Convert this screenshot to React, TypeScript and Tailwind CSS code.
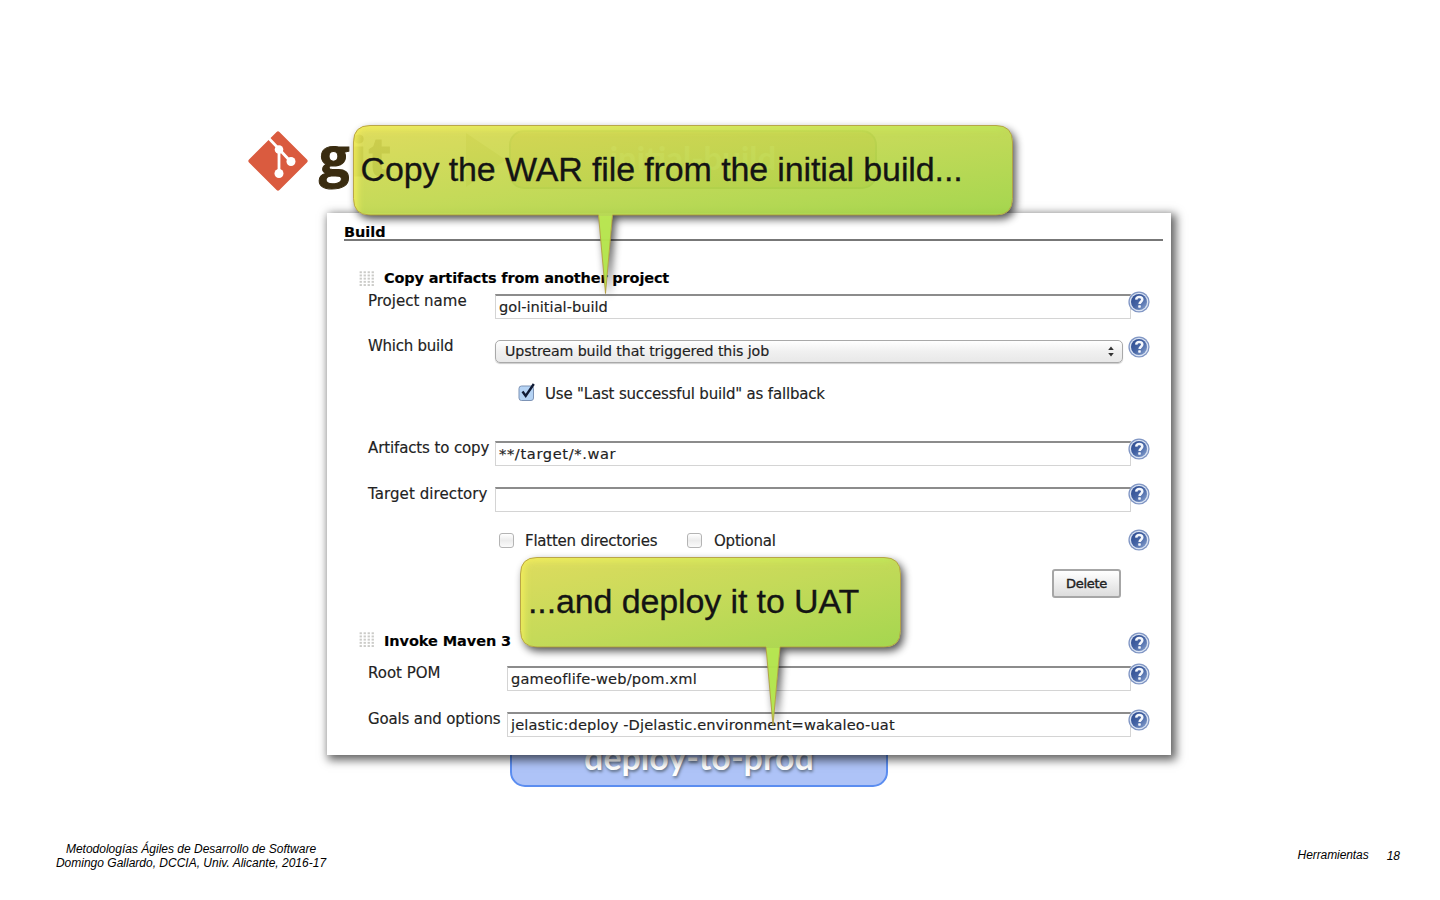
import type { ReactNode } from "react";

const UI = "font-['DejaVu_Sans',sans-serif] [-webkit-text-stroke:0.15px_#222]";

function Help({ className = "" }: { className?: string }) {
  return (
    <svg className={`relative h-[22px] w-[22px] shrink-0 ${className}`} viewBox="0 0 22 22">
      <defs>
        <linearGradient id="help" x1="0" y1="0" x2="1" y2="1">
          <stop offset="0" stopColor="#2c4a90" />
          <stop offset="0.5" stopColor="#4564a4" />
          <stop offset="1" stopColor="#8da6d2" />
        </linearGradient>
      </defs>
      <circle cx="11" cy="11" r="10.6" fill="#8096c4" />
      <circle cx="11" cy="11" r="9.3" fill="#dbe4f3" />
      <circle cx="11" cy="11" r="8" fill="url(#help)" />
      <path
        d="M8.200 8.600C8.400 6.900 9.500 6.100 11.200 6.100c1.900 0 3.100 .9 3.100 2.500 0 2-2.700 2.300-2.700 4.400"
        fill="none"
        stroke="#f4f7fc"
        strokeWidth="2.5"
      />
      <rect x="10.200" y="14.200" width="2.600" height="2.500" rx="0.6" fill="#f4f7fc" />
    </svg>
  );
}

function Grip() {
  const steps = [0, 1, 2, 3];
  return (
    <svg className="h-4 w-4 shrink-0" viewBox="0 0 16 16">
      {[0, 1, 2, 3, 4].map((r) =>
        steps.map((c) => (
          <rect key={`${r}-${c}`} x={0.6 + c * 4} y={0.3 + r * 3.2} width="2.300" height="1.900" fill="#cbcbc8" />
        ))
      )}
    </svg>
  );
}

function Label({ children, className }: { children: ReactNode; className: string }) {
  return <div className={`shrink-0 whitespace-nowrap text-[15px] leading-5 text-[#222] ${className}`}>{children}</div>;
}

function Field({ value, className }: { value: string; className: string }) {
  return (
    <div
      className={`flex h-[25px] shrink-0 items-center whitespace-nowrap border border-t-2 border-[#d4d4d4] border-t-[#8c8c8c] bg-white pb-px pl-[3px] text-[14.6px] leading-5 text-[#222] ${className}`}
    >
      {value}
    </div>
  );
}

function Box() {
  return (
    <div className="h-[15px] w-[15px] shrink-0 rounded-[3px] border border-[#b4b4b4] bg-linear-to-b from-white via-[#ececec] to-[#fafafa]" />
  );
}

function Callout({
  width,
  tip,
  id,
  children,
  className,
}: {
  width: number;
  tip: number;
  id: string;
  children: ReactNode;
  className: string;
}) {
  const w = width;
  const k = (180 * w) / (8100 + w * w);
  const d = `M17 .5H${w - 17}Q${w - 0.5} .5 ${w - 0.5} 17V73.500Q${w - 0.5} 90 ${w - 17} 90H${tip + 7}L${tip} 168.500L${tip - 7} 90H17Q.5 90 .5 73.500V17Q.5 .5 17 .5Z`;
  return (
    <div className={`absolute h-[170px] ${className}`}>
      <svg className="absolute inset-0 overflow-visible" width={w} height="170">
        <defs>
          <linearGradient id={`${id}-fill`} gradientUnits="userSpaceOnUse" x1="0" y1="0" x2={k * 90} y2={k * w}>
            <stop offset="0" stopColor="#dcd952" />
            <stop offset="0.5" stopColor="#bfd74c" />
            <stop offset="1" stopColor="#9ed342" />
          </linearGradient>
          <linearGradient id={`${id}-rim`} gradientUnits="userSpaceOnUse" x1="0" y1="0" x2={w} y2="0">
            <stop offset="0" stopColor="#f8f25c" />
            <stop offset="1" stopColor="#bdec58" />
          </linearGradient>
          <clipPath id={`${id}-clip`}>
            <path d={d} />
          </clipPath>
          <filter id={`${id}-blur`} filterUnits="userSpaceOnUse" x="-30" y="-30" width={w + 60} height="160">
            <feGaussianBlur stdDeviation="3.500" />
          </filter>
          <filter id={`${id}-shadow`} x="-20%" y="-20%" width="140%" height="150%">
            <feGaussianBlur in="SourceAlpha" stdDeviation="4" />
            <feOffset dx="3" dy="4" result="s" />
            <feComposite in="s" in2="SourceAlpha" operator="out" />
          </filter>
        </defs>
        <path d={d} filter={`url(#${id}-shadow)`} opacity="0.7" />
        <path d={d} fill={`url(#${id}-fill)`} fillOpacity="0.93" />
        <g clipPath={`url(#${id}-clip)`}>
          <path
            d={`M0 92V12Q0 0 12 0H${w - 10}`}
            fill="none"
            stroke={`url(#${id}-rim)`}
            strokeWidth="9"
            opacity="0.8"
            filter={`url(#${id}-blur)`}
          />
          <path d={`M${tip - 7} 91h14L${tip} 170Z`} fill="#bbec51" opacity="0.65" />
        </g>
        <path d={d} fill="none" stroke="#b29a3c" strokeOpacity="0.85" />
      </svg>
      <div className="relative flex h-[90px] items-center whitespace-nowrap pl-2 font-['Liberation_Sans',Arial,sans-serif] text-[34px] tracking-[-0.12px] text-[#141414] [-webkit-text-stroke:0.3px_#141414]">
        {children}
      </div>
    </div>
  );
}

function Diagram() {
  return (
    <>
      <svg className="absolute left-[247px] top-[130px]" width="62" height="62" viewBox="0 0 62 62">
        <rect x="9.500" y="9.500" width="43" height="43" rx="2" transform="rotate(45 31 31)" fill="#da5b3f" />
        <g stroke="#fff" strokeWidth="2.800" fill="none">
          <path d="M22 8.500L32 19v25M32 19l12 13" />
        </g>
        <circle cx="32" cy="19.500" r="4.300" fill="#fff" />
        <circle cx="32" cy="43.500" r="4.500" fill="#fff" />
        <circle cx="44" cy="31.500" r="4.500" fill="#fff" />
      </svg>
      <div className="absolute left-[319px] top-[117px] font-['Open_Sans',sans-serif] text-[54px] font-bold leading-[76px] tracking-[1px] text-[#3a2c10] [-webkit-text-stroke:1px_#3a2c10]">
        git
      </div>
      <svg className="absolute left-[400px] top-[130px]" width="110" height="62" viewBox="0 0 110 62">
        <path d="M66 3l40 27-40 27z" fill="#8f9152" opacity="0.6" />
      </svg>
      <div className="absolute left-[509px] top-[130px] flex h-[59px] w-[368px] items-center justify-center rounded-[15px] border-2 border-[#668f60] bg-[#d0ae80] pb-1 font-['Lato',sans-serif] text-[33px] font-bold text-[#f4f4df]">
        initial-build
      </div>
      <div className="absolute left-[510px] top-[727px] flex h-[60px] w-[378px] items-center justify-center rounded-[15px] border-2 border-[#5b8df0] bg-[#aec3f7] pb-px font-['Lato',sans-serif] text-[34px] font-bold text-white [text-shadow:1px_2px_3px_#64748b]">
        deploy-to-prod
      </div>
    </>
  );
}

function BuildPanel() {
  return (
    <section
      className={`relative ml-[327px] flex h-[542px] w-[844px] flex-col bg-white shadow-[3px_3px_9px_2px_rgba(0,0,0,0.62)] ${UI}`}
    >
      <h1 className="ml-[17px] mr-2 h-7 border-b-2 border-[#777] pt-[9px] text-[14.5px] font-bold leading-5 text-black">
        Build
      </h1>
      <div className="flex h-[50px] items-start pl-8 pt-[30px]">
        <Grip />
        <h2 className="-mt-[3px] ml-[9px] whitespace-nowrap text-[14.5px] font-bold leading-5 tracking-[-0.15px] text-black">
          Copy artifacts from another project
        </h2>
      </div>
      <div className="flex h-[45px] items-start pl-[41px]">
        <Label className="w-[127px]">Project name</Label>
        <Field value="gol-initial-build" className="mt-[3px] w-[636px]" />
        <Help className="-ml-[3px]" />
      </div>
      <div className="flex h-[46px] items-start pl-[41px]">
        <Label className="w-[127px] tracking-[-0.25px]">Which build</Label>
        <div className="mt-[4px] flex h-[23px] w-[628px] shrink-0 items-center justify-between rounded-[5px] border border-[#a9a9a9] bg-linear-to-b from-white via-[#f0f0f0] to-[#e8e8e8] pl-[9px] pr-[7px] text-[14.2px] tracking-[-0.11px] text-[#222] shadow-[0_1px_1px_#ccc]">
          <span className="whitespace-nowrap">Upstream build that triggered this job</span>
          <svg width="8" height="11" viewBox="0 0 8 11" fill="#333">
            <path d="M4 .5L6.800 4H1.200zM4 10.500L6.800 7H1.200z" />
          </svg>
        </div>
        <Help className="ml-[5px]" />
      </div>
      <div className="flex h-14 items-start pl-[191px] pt-px">
        <svg className="h-[18px] w-[18px] shrink-0" viewBox="0 0 18 18">
          <rect x="1" y="3" width="14.500" height="14.500" rx="2.500" fill="#b5d3f4" stroke="#7d93b5" />
          <path d="M4.500 8.500l3.200 4.500L15.800 1" fill="none" stroke="#101b35" strokeWidth="2.400" />
        </svg>
        <Label className="ml-[9px] mt-px tracking-[-0.18px]">Use "Last successful build" as fallback</Label>
      </div>
      <div className="flex h-[45px] items-start pl-[41px]">
        <Label className="w-[127px] tracking-[-0.12px]">Artifacts to copy</Label>
        <Field value="**/target/*.war" className="mt-[3px] w-[636px] tracking-[0.64px]" />
        <Help className="-ml-[3px]" />
      </div>
      <div className="flex h-[46px] items-start pl-[41px]">
        <Label className="mt-px w-[127px] tracking-[0.08px]">Target directory</Label>
        <Field value="" className="mt-[4px] w-[636px]" />
        <Help className="-ml-[3px]" />
      </div>
      <div className="flex h-10 items-start pl-[172px]">
        <div className="flex w-[629px] pt-[4px]">
          <Box />
          <Label className="-mt-[2px] ml-[11px] w-[162px] tracking-[-0.23px]">Flatten directories</Label>
          <Box />
          <Label className="-mt-[2px] ml-[12px] tracking-[-0.2px]">Optional</Label>
        </div>
        <Help />
      </div>
      <div className="flex h-[63px] items-start pl-[725px]">
        <button className="h-[29px] w-[69px] rounded-[3px] border-2 border-[#a6a6a6] bg-linear-to-b from-white to-[#dddddd] text-[13px] tracking-[-0.3px] text-[#222] [-webkit-text-stroke:0.4px_#222]">
          Delete
        </button>
      </div>
      <div className="flex h-[31px] items-start pl-8">
        <Grip />
        <h2 className="-mt-px ml-[9px] w-[744px] whitespace-nowrap text-[14.5px] font-bold leading-5 tracking-[-0.08px] text-black">
          Invoke Maven 3
        </h2>
        <Help />
      </div>
      <div className="flex h-[46px] items-start pl-[41px]">
        <Label className="w-[139px]">Root POM</Label>
        <Field value="gameoflife-web/pom.xml" className="mt-[3px] w-[624px] tracking-[0.18px]" />
        <Help className="-ml-[3px]" />
      </div>
      <div className="flex h-[46px] items-start pl-[41px]">
        <Label className="w-[139px] tracking-[-0.15px]">Goals and options</Label>
        <Field
          value="jelastic:deploy -Djelastic.environment=wakaleo-uat"
          className="mt-[3px] w-[624px] tracking-[0.13px]"
        />
        <Help className="-ml-[3px]" />
      </div>
    </section>
  );
}

export default function App() {
  return (
    <main className="relative flex h-[900px] w-[1440px] flex-col overflow-hidden bg-white pt-[213px]">
      <Diagram />
      <BuildPanel />
      <Callout id="copy" width={660} tip={252.5} className="left-[352.500px] top-[124.500px] w-[660px]">
        Copy the WAR file from the initial build...
      </Callout>
      <Callout id="deploy" width={381} tip={253} className="left-[520px] top-[556.500px] w-[381px]">
        ...and deploy it to UAT
      </Callout>
      <footer className="flex items-start justify-between pl-[55px] pr-10 pt-[87px] font-['Liberation_Sans',Arial,sans-serif] text-[12px] italic leading-[14px] text-black">
        <p className="w-[272px] whitespace-nowrap text-center">
          Metodologías Ágiles de Desarrollo de Software
          <br />
          Domingo Gallardo, DCCIA, Univ. Alicante, 2016-17
        </p>
        <div className="flex gap-[18px] pt-[6px]">
          <span className="tracking-[-0.08px]">Herramientas</span>
          <span className="pt-px">18</span>
        </div>
      </footer>
    </main>
  );
}
